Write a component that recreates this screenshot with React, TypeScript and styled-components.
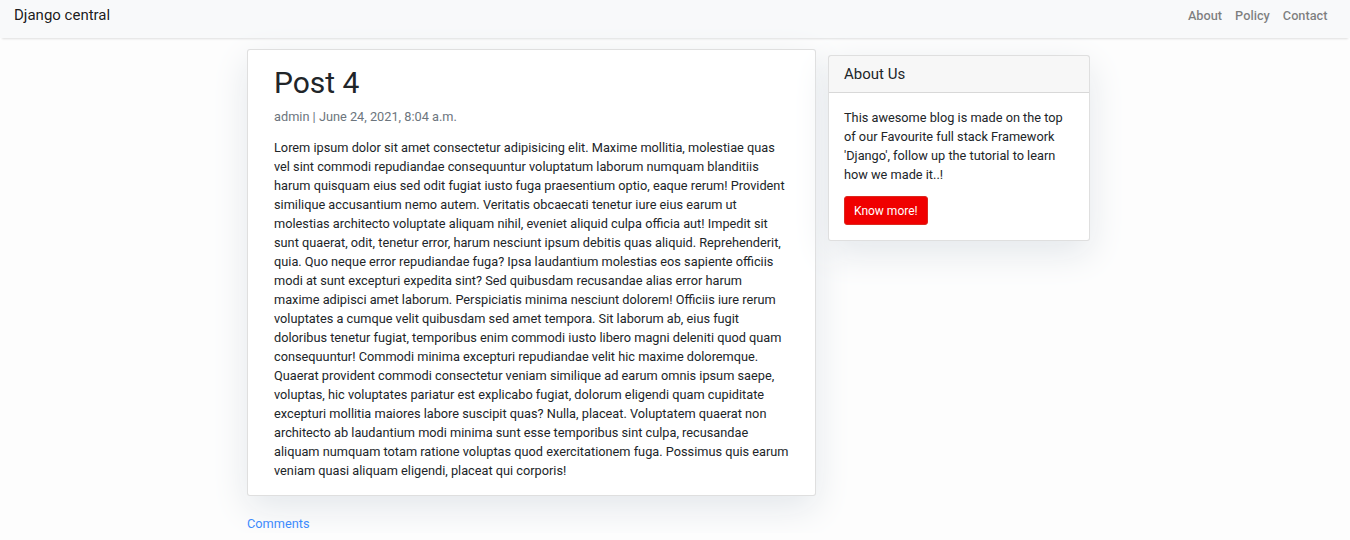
import React from "react";
import styled, { createGlobalStyle } from "styled-components";

const GlobalStyle = createGlobalStyle`
	html, body {
		margin: 0;
		padding: 0;
	}
	body {
		font-family: Roboto, "Liberation Sans", sans-serif;
		font-size: 12.75px;
		line-height: 19px;
		color: #212529;
		background-color: #fdfdfd;
	}
	* {
		box-sizing: border-box;
	}
`;

const Navbar = styled.nav`
	height: 38px;
	display: flex;
	align-items: center;
	justify-content: space-between;
	padding: 0 16px 8px 14px;
	background-color: #f8f9fa;
	box-shadow: 0 3px 2px -2px rgba(0, 0, 0, 0.12);
`;

const Brand = styled.a`
	font-size: 15px;
	color: rgba(0, 0, 0, 0.9);
	text-decoration: none;
`;

const NavList = styled.ul`
	display: flex;
	list-style: none;
	margin: 0;
	padding: 0;
`;

const NavLink = styled.a`
	display: block;
	padding: 0 6.5px;
	font-weight: 500;
	color: rgba(0, 0, 0, 0.5);
	text-decoration: none;
`;

const Container = styled.div`
	width: 856px;
	margin: 0 auto;
`;

const Row = styled.div`
	display: flex;
	align-items: flex-start;
`;

const Card = styled.div`
	background: #fff;
	border: 1px solid rgba(0, 0, 0, 0.125);
	border-radius: 3px;
	box-shadow: 0 12px 36px #e3e7eb;
`;

const PostCard = styled(Card)`
	width: 569px;
	margin-top: 11px;
	margin-bottom: 18px;
	padding: 15px 26px;
`;

const Title = styled.h1`
	margin: 0 0 6px;
	font-size: 30px;
	font-weight: 400;
	line-height: 36px;
`;

const Meta = styled.p`
	margin: 0 0 12px;
	color: #6c757d;
`;

const CardText = styled.p`
	margin: 0 0 12px;
	&:last-child {
		margin-bottom: 0;
	}
`;

const Sidebar = styled.aside`
	width: 262px;
	margin-left: 12px;
`;

const SideCard = styled(Card)`
	margin-top: 17px;
`;

const CardHeader = styled.h5`
	margin: 0;
	padding: 9px 15px;
	font-size: 15px;
	font-weight: 400;
	line-height: 18px;
	background-color: rgba(0, 0, 0, 0.03);
	border-bottom: 1px solid rgba(0, 0, 0, 0.125);
`;

const CardBody = styled.div`
	padding: 15px;
`;

const DangerButton = styled.a`
	display: inline-block;
	padding: 4.5px 9px;
	font-size: 12px;
	line-height: 18px;
	color: #fff;
	background-color: #f00000;
	border: 1px solid #dc281e;
	border-radius: 3px;
	text-decoration: none;
`;

const CommentsLink = styled.a`
	color: #3d8bfd;
	text-decoration: none;
`;

const content =
	"Lorem ipsum dolor sit amet consectetur adipisicing elit. Maxime mollitia, molestiae quas vel sint commodi repudiandae consequuntur voluptatum laborum numquam blanditiis harum quisquam eius sed odit fugiat iusto fuga praesentium optio, eaque rerum! Provident similique accusantium nemo autem. Veritatis obcaecati tenetur iure eius earum ut molestias architecto voluptate aliquam nihil, eveniet aliquid culpa officia aut! Impedit sit sunt quaerat, odit, tenetur error, harum nesciunt ipsum debitis quas aliquid. Reprehenderit, quia. Quo neque error repudiandae fuga? Ipsa laudantium molestias eos sapiente officiis modi at sunt excepturi expedita sint? Sed quibusdam recusandae alias error harum maxime adipisci amet laborum. Perspiciatis minima nesciunt dolorem! Officiis iure rerum voluptates a cumque velit quibusdam sed amet tempora. Sit laborum ab, eius fugit doloribus tenetur fugiat, temporibus enim commodi iusto libero magni deleniti quod quam consequuntur! Commodi minima excepturi repudiandae velit hic maxime doloremque. Quaerat provident commodi consectetur veniam similique ad earum omnis ipsum saepe, voluptas, hic voluptates pariatur est explicabo fugiat, dolorum eligendi quam cupiditate excepturi mollitia maiores labore suscipit quas? Nulla, placeat. Voluptatem quaerat non architecto ab laudantium modi minima sunt esse temporibus sint culpa, recusandae aliquam numquam totam ratione voluptas quod exercitationem fuga. Possimus quis earum veniam quasi aliquam eligendi, placeat qui corporis!";

const links = ["About", "Policy", "Contact"];

export default function App() {
	return (
		<>
			<GlobalStyle />
			<Navbar>
				<Brand href="#">Django central</Brand>
				<NavList>
					{links.map((l) => (
						<li key={l}>
							<NavLink href="#">{l}</NavLink>
						</li>
					))}
				</NavList>
			</Navbar>
			<Container>
				<Row>
					<PostCard>
						<Title>Post 4</Title>
						<Meta>admin | June 24, 2021, 8:04 a.m.</Meta>
						<CardText>{content}</CardText>
					</PostCard>
					<Sidebar>
						<SideCard>
							<CardHeader>About Us</CardHeader>
							<CardBody>
								<CardText>
									This awesome blog is made on the top of our Favourite full stack Framework 'Django', follow up the tutorial to learn how we made it..!
								</CardText>
								<DangerButton href="#">Know more!</DangerButton>
							</CardBody>
						</SideCard>
					</Sidebar>
				</Row>
				<CommentsLink href="#">Comments</CommentsLink>
			</Container>
		</>
	);
}
